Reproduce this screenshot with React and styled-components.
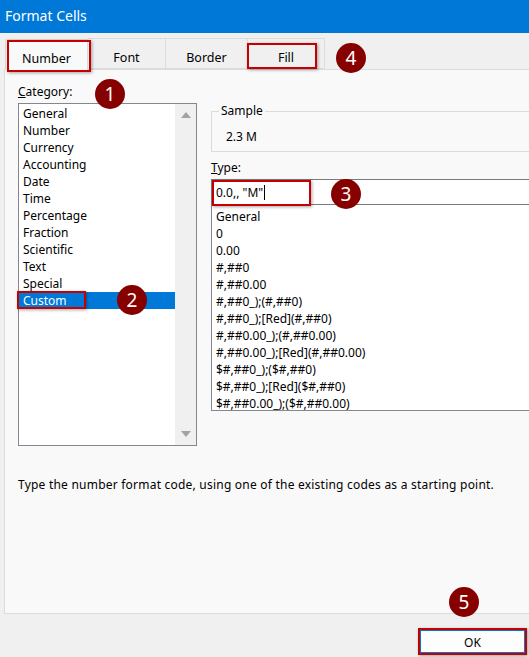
import React from 'react';
import styled, { createGlobalStyle } from 'styled-components';

const GlobalStyle = createGlobalStyle`
  html, body {
    margin: 0;
    padding: 0;
    background: #f0f0f0;
  }
  body {
    font-family: "Noto Sans", "Open Sans", sans-serif;
    font-size: 12px;
    color: #000;
  }
`;

const Window = styled.div`
  position: relative;
  width: 529px;
  height: 657px;
  overflow: hidden;
  background: #f0f0f0;
  display: flex;
  flex-direction: column;
`;

const TitleBar = styled.div`
  flex: none;
  height: 33px;
  box-sizing: border-box;
  padding: 0 0 3px 5px;
  display: flex;
  align-items: center;
  background: #0078d7;
  color: #fff;
  font-size: 14px;
`;

const TabStrip = styled.div`
  flex: none;
  height: 36px;
  padding-left: 5px;
  display: flex;
  align-items: flex-end;
`;

const Tab = styled.div`
  position: relative;
  z-index: ${p => (p.$active ? 2 : 1)};
  width: ${p => p.$width}px;
  height: 31px;
  margin-bottom: ${p => (p.$active ? '-1px' : '0')};
  box-sizing: border-box;
  padding-top: 7px;
  display: flex;
  align-items: center;
  justify-content: center;
  font-size: 12.5px;
  background: ${p => (p.$active ? '#f9f9f9' : '#f0f0f0')};
  border: 1px solid #dcdcdc;
  border-bottom: ${p => (p.$active ? 'none' : '1px solid #dcdcdc')};
  border-left: ${p => (p.$first ? '1px solid #dcdcdc' : 'none')};
`;

const Highlight = styled.div`
  position: absolute;
  top: ${p => p.$top}px;
  left: ${p => p.$left}px;
  width: ${p => p.$width}px;
  height: ${p => p.$height}px;
  box-sizing: border-box;
  border: 2px solid #c40000;
  box-shadow: 1px 1px 3px rgba(0, 0, 0, 0.35);
  pointer-events: none;
  z-index: 5;
`;

const Badge = styled.div`
  position: absolute;
  top: ${p => p.$y - 15}px;
  left: ${p => p.$x - 15}px;
  width: 30px;
  height: 30px;
  border-radius: 50%;
  background: #870000;
  color: #fff;
  font-size: 19px;
  display: flex;
  align-items: center;
  justify-content: center;
  z-index: 10;
`;

const Panel = styled.div`
  flex: none;
  margin-left: 4px;
  width: 600px;
  height: 545px;
  box-sizing: border-box;
  padding: 14px 0 0 13px;
  background: #f9f9f9;
  border: 1px solid #dcdcdc;
  border-right: none;
  display: flex;
  flex-direction: column;
`;

const Columns = styled.div`
  display: flex;
  gap: 14px;
`;

const LeftCol = styled.div`
  width: 179px;
  display: flex;
  flex-direction: column;
`;

const RightCol = styled.div`
  width: 360px;
  padding-top: 19px;
  display: flex;
  flex-direction: column;
`;

const FieldLabel = styled.div`
  height: 16px;
  line-height: 16px;
  margin-top: ${p => p.$top || 0}px;
  margin-bottom: ${p => p.$gap || 3}px;
`;

const ListBox = styled.div`
  height: 343px;
  box-sizing: border-box;
  border: 1px solid #828790;
  background: #fff;
  display: flex;
`;

const Items = styled.div`
  flex: 1;
  padding-top: 1px;
`;

const Item = styled.div`
  position: relative;
  height: 17px;
  line-height: 17px;
  padding-left: 4px;
  background: ${p => (p.$selected ? '#0078d7' : 'transparent')};
  color: ${p => (p.$selected ? '#fff' : '#000')};
`;

const ScrollBar = styled.div`
  width: 21px;
  background: #f0f0f0;
  display: flex;
  flex-direction: column;
  justify-content: space-between;
  align-items: center;
  padding: 8px 0;
`;

const Arrow = styled.div`
  width: 0;
  height: 0;
  border-left: 5px solid transparent;
  border-right: 5px solid transparent;
  ${p => (p.$down
    ? 'border-top: 6px solid #a3a3a3;'
    : 'border-bottom: 6px solid #a3a3a3;')}
`;

const Sample = styled.fieldset`
  margin: 0;
  padding: 10px 0 6px 14px;
  border: 1px solid #dcdcdc;
  border-right: none;
  line-height: 16px;

  legend {
    margin-left: -7px;
    padding: 0 2px;
    line-height: 16px;
  }
`;

const TypeInput = styled.div`
  position: relative;
  height: 26px;
  box-sizing: border-box;
  padding-left: 4px;
  border: 1px solid #7a7a7a;
  border-right: none;
  background: #fff;
  display: flex;
  align-items: center;
`;

const Caret = styled.span`
  display: inline-block;
  width: 1px;
  height: 15px;
  margin-left: 1px;
  background: #000;
  vertical-align: middle;
`;

const CodeList = styled.div`
  height: 207px;
  margin-top: -1px;
  box-sizing: border-box;
  padding-top: 3px;
  border: 1px solid #828790;
  border-right: none;
  background: #fff;
`;

const Code = styled.div`
  height: 17px;
  line-height: 17px;
  padding-left: 4px;
  white-space: nowrap;
`;

const Hint = styled.div`
  margin-top: 31px;
  line-height: 16px;
  letter-spacing: 0.22px;
`;

const Footer = styled.div`
  flex: 1;
  display: flex;
  justify-content: flex-end;
  align-items: flex-start;
  padding: 14px 2px 0 0;
`;

const Button = styled.button`
  position: relative;
  width: 109px;
  height: 27px;
  box-sizing: border-box;
  padding-top: 2px;
  font: inherit;
  font-size: 12px;
  color: #000;
  background: #fdfdfd;
  border: 2px solid #c40000;
  box-shadow: inset 0 0 0 1px #0078d7, 1px 1px 3px rgba(0, 0, 0, 0.35);
`;

const categories = [
  'General', 'Number', 'Currency', 'Accounting', 'Date', 'Time',
  'Percentage', 'Fraction', 'Scientific', 'Text', 'Special', 'Custom',
];

const codes = [
  'General',
  '0',
  '0.00',
  '#,##0',
  '#,##0.00',
  '#,##0_);(#,##0)',
  '#,##0_);[Red](#,##0)',
  '#,##0.00_);(#,##0.00)',
  '#,##0.00_);[Red](#,##0.00)',
  '$#,##0_);($#,##0)',
  '$#,##0_);[Red]($#,##0)',
  '$#,##0.00_);($#,##0.00)',
];

const tabs = [
  { name: 'Number', width: 83 },
  { name: 'Font', width: 78 },
  { name: 'Border', width: 82 },
  { name: 'Fill', width: 77 },
];

export default function App() {
  return (
    <>
      <GlobalStyle />
      <Window>
        <TitleBar>Format Cells</TitleBar>

        <TabStrip>
          {tabs.map((t, i) => (
            <Tab key={t.name} $width={t.width} $active={i === 0} $first={i === 0}>
              {t.name}
              {t.name === 'Number' && <Highlight $top={0} $left={1} $width={84} $height={32} />}
              {t.name === 'Fill' && <Highlight $top={4} $left={-1} $width={70} $height={26} />}
            </Tab>
          ))}
        </TabStrip>

        <Panel>
          <Columns>
            <LeftCol>
              <FieldLabel><u>C</u>ategory:</FieldLabel>
              <ListBox>
                <Items>
                  {categories.map(c => (
                    <Item key={c} $selected={c === 'Custom'}>
                      {c}
                      {c === 'Custom' && <Highlight $top={-1} $left={-2} $width={69} $height={18} />}
                    </Item>
                  ))}
                </Items>
                <ScrollBar>
                  <Arrow />
                  <Arrow $down />
                </ScrollBar>
              </ListBox>
            </LeftCol>

            <RightCol>
              <Sample>
                <legend>Sample</legend>
                2.3 M
              </Sample>
              <FieldLabel $top={8} $gap={3}><u>T</u>ype:</FieldLabel>
              <TypeInput>
                <span>0.0,, "M"</span><Caret />
                <Highlight $top={0} $left={0} $width={99} $height={26} />
              </TypeInput>
              <CodeList>
                {codes.map(c => <Code key={c}>{c}</Code>)}
              </CodeList>
            </RightCol>
          </Columns>

          <Hint>Type the number format code, using one of the existing codes as a starting point.</Hint>
        </Panel>

        <Footer>
          <Button>OK</Button>
        </Footer>

        <Badge $x={110} $y={94}>1</Badge>
        <Badge $x={132} $y={300}>2</Badge>
        <Badge $x={346} $y={194}>3</Badge>
        <Badge $x={351} $y={58}>4</Badge>
        <Badge $x={464} $y={602}>5</Badge>
      </Window>
    </>
  );
}
